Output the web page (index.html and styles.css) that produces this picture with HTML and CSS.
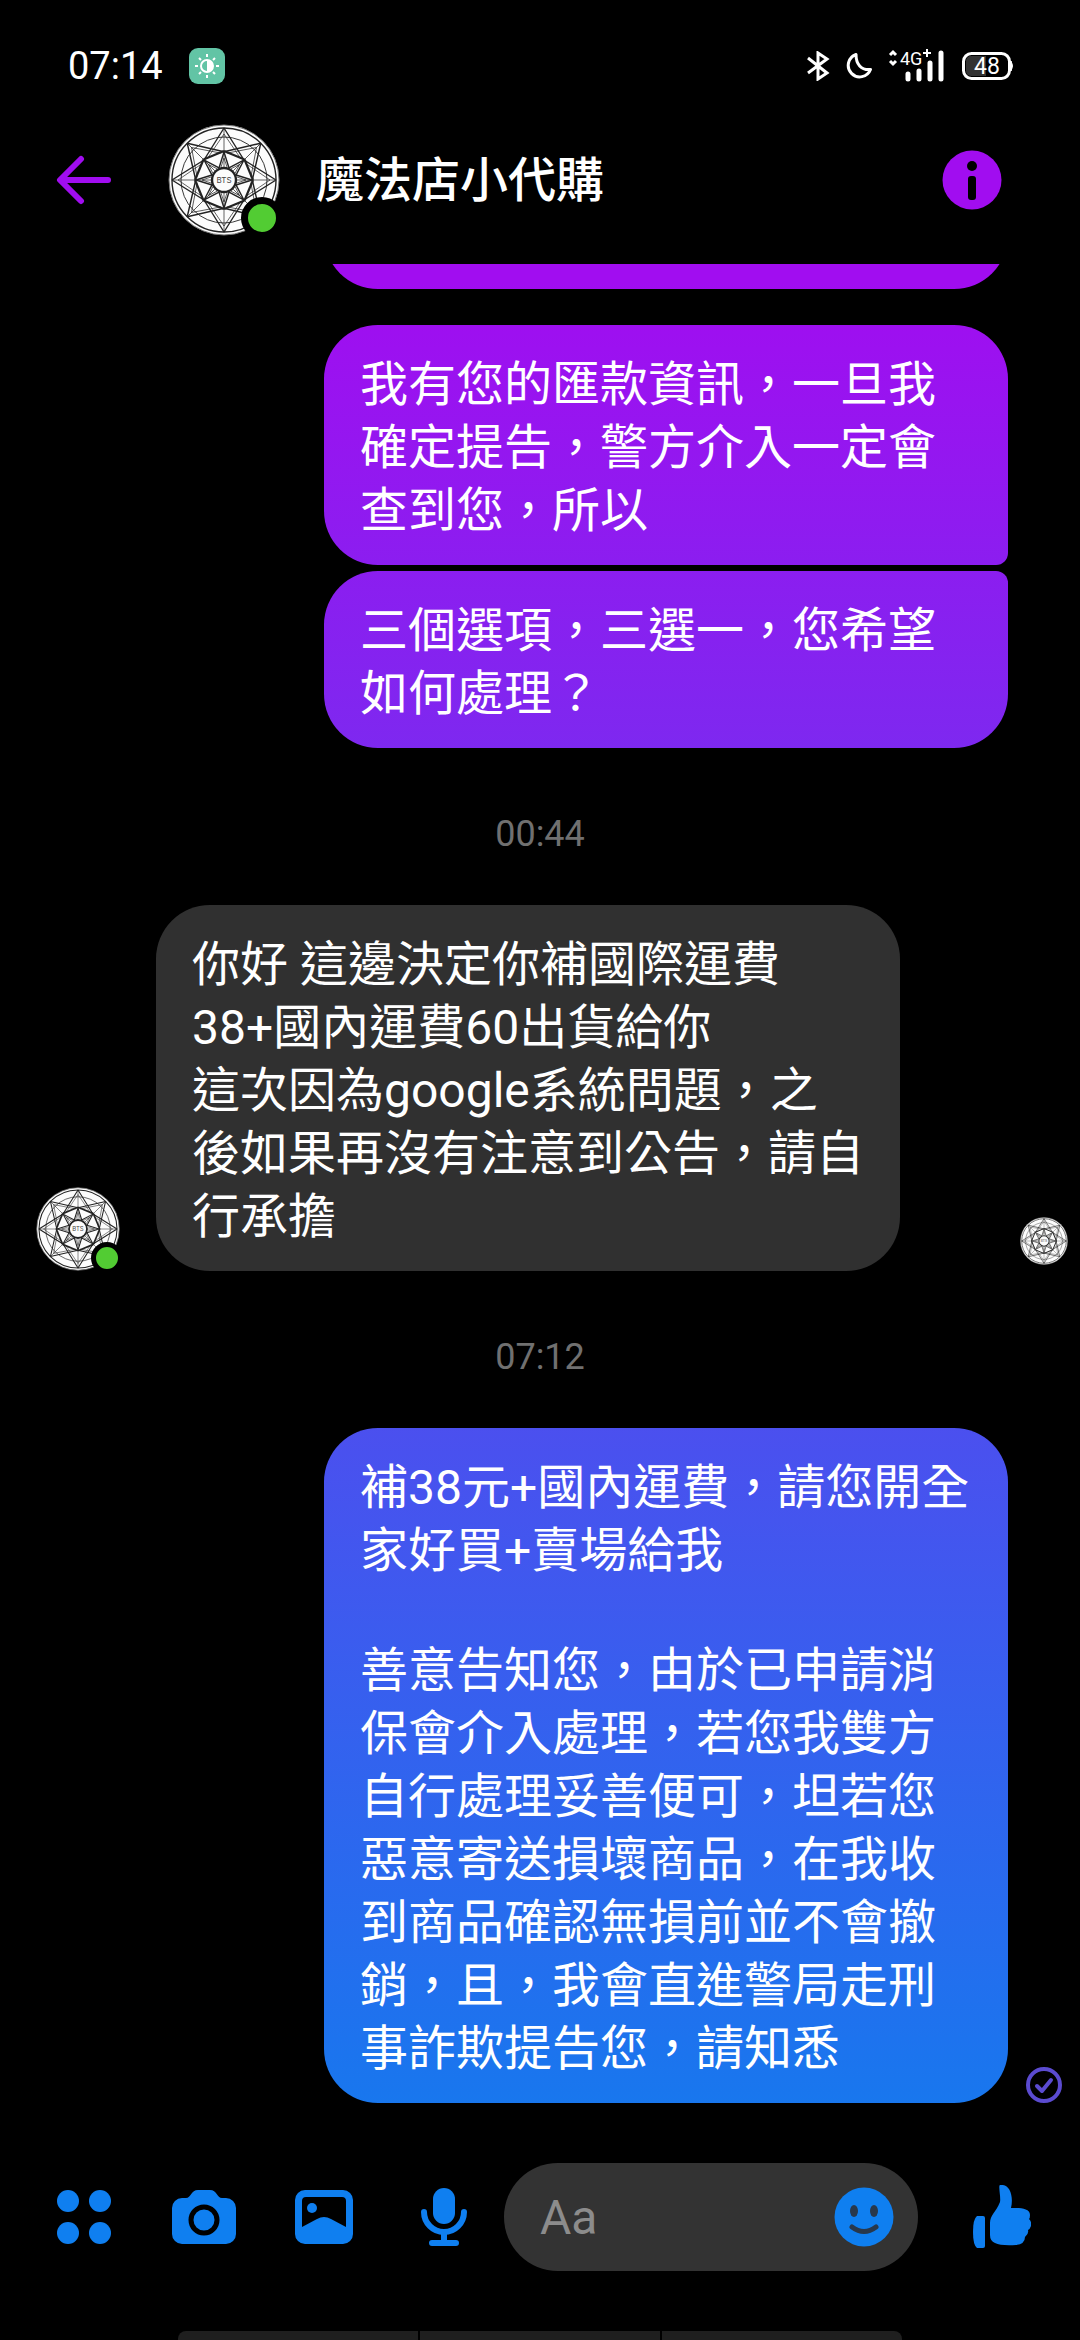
FILE: index.html
```html
<!DOCTYPE html>
<html lang="zh-Hant">
<head>
    <meta charset="UTF-8">
    <meta name="viewport" content="width=device-width, initial-scale=1.0">
    <title>魔法店小代購</title>
    <link rel="stylesheet" href="styles.css">
</head>
<body>

    <!-- Avatar, shared by header / message / seen marker -->
    <svg class="sprite" width="0" height="0" aria-hidden="true">
        <defs>
            <g id="ray">
                <path d="M0 -52L20 -20M0 -52L-20 -20" stroke-width="1.4"/>
                <path d="M0 -46L17 -21M0 -46L-17 -21M0 -52V-13" stroke-width=".7"/>
                <path d="M0 -29L20.5 -20.5" stroke-width="2.2"/>
                <path d="M0 -28L5 -12M0 -28L-5 -12" stroke-width="1.4"/>
                <path d="M0 -22L3 -13M0 -22L-3 -13" stroke-width=".7"/>
            </g>
            <symbol id="avatar" viewBox="-56 -56 112 112">
                <circle r="55" fill="#fcfcfc" stroke="#777" stroke-width="1"/>
                <g fill="none" stroke="#222">
                    <circle r="52" stroke-width="1.4"/>
                    <circle r="43" stroke-width=".9"/>
                    <use href="#ray"/>
                    <use href="#ray" transform="rotate(45)"/>
                    <use href="#ray" transform="rotate(90)"/>
                    <use href="#ray" transform="rotate(135)"/>
                    <use href="#ray" transform="rotate(180)"/>
                    <use href="#ray" transform="rotate(225)"/>
                    <use href="#ray" transform="rotate(270)"/>
                    <use href="#ray" transform="rotate(315)"/>
                    <circle r="12" fill="#fcfcfc" stroke-width="2.4"/>
                </g>
                <text class="avatar-text" text-anchor="middle" y="3">BTS</text>
            </symbol>
        </defs>
    </svg>

    <div class="status-bar">
        <span class="clock">07:14</span>
        <svg class="app-badge" width="36" height="36" viewBox="0 0 36 36" aria-hidden="true">
            <rect width="36" height="36" rx="9" fill="#62c4a5"/>
            <circle cx="18" cy="18" r="6" fill="none" stroke="#fff" stroke-width="2"/>
            <path d="M18 12a6 6 0 0 1 0 12z" fill="#fff"/>
            <path d="M18 6v3M18 27v3M6 18h3M27 18h3M10 10l2 2M24 24l2 2M26 10l-2 2M12 24l-2 2" stroke="#fff" stroke-width="2"/>
        </svg>
        <div class="status-icons">
            <svg width="24" height="30" viewBox="0 0 24 30" fill="none" stroke="#fff" stroke-width="3" aria-label="藍牙">
                <path d="M2 7l19 15-9 6V2l9 6L2 22"/>
            </svg>
            <svg width="26" height="28" viewBox="0 0 26 28" fill="none" stroke="#fff" stroke-width="3" stroke-linejoin="round" aria-label="勿擾">
                <path d="M10 2.500C10 12 15 18.500 24.500 17.500A11.500 11.500 0 1 1 10 2.500z"/>
            </svg>
            <svg class="signal" width="58" height="40" viewBox="0 0 58 40" aria-label="4G+">
                <path d="M2 9l3-3 3 3M2 15l3 3 3-3" fill="none" stroke="#fff" stroke-width="3"/>
                <text class="signal-text" x="12" y="19">4G</text>
                <path d="M35 7h8M39 3v8" stroke="#fff" stroke-width="2"/>
                <path d="M20 28v5M31 25v8M42 17v16M53 7v26" stroke="#fff" stroke-width="5" stroke-linecap="round"/>
            </svg>
            <svg width="52" height="30" viewBox="0 0 52 30" aria-label="電量">
                <rect x="1.500" y="2.500" width="46" height="25" rx="8" fill="none" stroke="#fff" stroke-width="3"/>
                <path d="M9 5h15v20H9a5 5 0 0 1-5-5V10a5 5 0 0 1 5-5z" fill="#333"/>
                <path d="M49 10q3 5 0 10z" fill="#fff" stroke="#fff"/>
                <text class="battery-text" x="25" y="23" text-anchor="middle">48</text>
            </svg>
        </div>
    </div>

    <header class="header">
        <button class="icon-btn" type="button" aria-label="返回">
            <svg width="56" height="50" viewBox="0 0 56 50" fill="none" stroke="#a10df0" stroke-width="6" stroke-linecap="round" stroke-linejoin="round">
                <path d="M25 4L4 25l21 21M5 25h47"/>
            </svg>
        </button>
        <div class="avatar avatar-large">
            <svg viewBox="0 0 112 112"><use href="#avatar"/></svg>
            <span class="online"></span>
        </div>
        <h1 class="name">魔法店小代購</h1>
        <button class="icon-btn info" type="button" aria-label="資訊">
            <svg width="60" height="60" viewBox="0 0 60 60">
                <circle cx="30" cy="30" r="29.500" fill="#a10df0"/>
                <circle cx="30" cy="16" r="5" fill="#000"/>
                <rect x="26" y="26" width="8" height="24" rx="3" fill="#000"/>
            </svg>
        </button>
    </header>

    <main class="thread">
        <div class="row sent">
            <div class="bubble bubble-cut"></div>
        </div>

        <div class="row sent">
            <p class="bubble bubble-first">我有您的匯款資訊，一旦我確定提告，警方介入一定會查到您，所以</p>
        </div>
        <div class="row sent">
            <p class="bubble bubble-last">三個選項，三選一，您希望如何處理？</p>
        </div>

        <time class="time">00:44</time>

        <div class="row received">
            <div class="avatar avatar-small">
                <svg viewBox="0 0 112 112"><use href="#avatar"/></svg>
                <span class="online"></span>
            </div>
            <p class="bubble">你好 這邊決定你補國際運費<br>38+國內運費60出貨給你<br>這次因為google系統問題，之後如果再沒有注意到公告，請自行承擔</p>
            <div class="receipt">
                <svg class="seen" viewBox="0 0 112 112"><use href="#avatar"/></svg>
            </div>
        </div>

        <time class="time">07:12</time>

        <div class="row sent">
            <div class="bubble">
                <p>補38元+國內運費，請您開全家好買+賣場給我</p>
                <p>善意告知您，由於已申請消保會介入處理，若您我雙方自行處理妥善便可，坦若您惡意寄送損壞商品，在我收到商品確認無損前並不會撤銷，且，我會直進警局走刑事詐欺提告您，請知悉</p>
            </div>
            <div class="receipt">
                <svg width="36" height="36" viewBox="0 0 36 36" fill="none" stroke="#5b4bd0" aria-label="已傳送">
                    <circle cx="18" cy="18" r="16" stroke-width="4"/>
                    <path d="M11 19l5 5 9-11" stroke-width="4" stroke-linecap="round" stroke-linejoin="round"/>
                </svg>
            </div>
        </div>
    </main>

    <form class="composer">
        <button class="icon-btn" type="button" aria-label="更多">
            <svg width="54" height="54" viewBox="0 0 54 54" fill="#0f7ff0">
                <circle cx="11" cy="11" r="11"/>
                <circle cx="43" cy="11" r="11"/>
                <circle cx="11" cy="43" r="11"/>
                <circle cx="43" cy="43" r="11"/>
            </svg>
        </button>
        <button class="icon-btn" type="button" aria-label="相機">
            <svg width="64" height="54" viewBox="0 0 64 54" fill="#0f7ff0">
                <path d="M10 8h4c5 0 5-8 12-8h12c7 0 7 8 12 8h4a10 10 0 0 1 10 10v26a10 10 0 0 1-10 10H10A10 10 0 0 1 0 44V18A10 10 0 0 1 10 8z"/>
                <circle cx="32" cy="30" r="13" stroke="#000" stroke-width="5"/>
            </svg>
        </button>
        <button class="icon-btn" type="button" aria-label="相片">
            <svg width="58" height="54" viewBox="0 0 58 54" fill="#0f7ff0">
                <path fill-rule="evenodd" d="M10 0h38a10 10 0 0 1 10 10v34a10 10 0 0 1-10 10H10A10 10 0 0 1 0 44V10A10 10 0 0 1 10 0zM11 7q-4 0-4 4v26l15-8q7-4 14 0l15 8V11q0-4-4-4z"/>
                <circle cx="17" cy="18" r="5"/>
            </svg>
        </button>
        <button class="icon-btn" type="button" aria-label="語音">
            <svg width="46" height="60" viewBox="0 0 46 60" fill="none" stroke="#0f7ff0" stroke-width="6" stroke-linecap="round">
                <rect x="12" y="1" width="22" height="36" rx="11" fill="#0f7ff0" stroke="none"/>
                <path d="M3 25c0 11 9 20 20 20s20-9 20-20M23 46v9M11 56h24"/>
            </svg>
        </button>
        <div class="field">
            <input class="field-input" type="text" placeholder="Aa" aria-label="訊息">
            <button class="emoji-btn" type="button" aria-label="表情符號">
                <svg width="60" height="60" viewBox="0 0 60 60">
                    <circle cx="30" cy="30" r="29.500" fill="#0f7ff0"/>
                    <ellipse cx="20" cy="24" rx="4" ry="6" fill="#28384c"/>
                    <ellipse cx="40" cy="24" rx="4" ry="6" fill="#28384c"/>
                    <path d="M18 40q12 9 24 0" fill="none" stroke="#28384c" stroke-width="5" stroke-linecap="round"/>
                </svg>
            </button>
        </div>
        <button class="icon-btn like" type="button" aria-label="讚">
            <svg width="58" height="64" viewBox="0 0 58 64" fill="#0f7ff0">
                <path d="M4 31h6q2 0 2 2v28q0 2-2 2H4Q0 60 0 47T4 31z"/>
                <path d="M28 0c8-1 13 10 10 23 9 0 19 0 19 7q0 3-1 4 3 3 2 7-1 3-3 4 1 4-3 7 0 7-9 8-15 1-21-2-5-2-5-8V38c0-8 6-11 10-21 1-5-2-16 0-17z"/>
            </svg>
        </button>
    </form>

    <div class="nav-hint">
        <span></span>
        <span></span>
        <span></span>
    </div>

</body>
</html>
```
FILE: styles.css
```css
* {
    margin: 0;
    padding: 0;
    box-sizing: border-box;
}

body {
    font-family: Roboto, "Noto Sans CJK TC", sans-serif;
    background-color: #000;
    color: #fff;
    height: 100vh;
    display: flex;
    flex-direction: column;
    overflow: hidden;
}

svg {
    display: block;
    flex: none;
}

button {
    background: none;
    border: none;
    cursor: pointer;
}

.sprite {
    position: absolute;
}

/* Status bar */
.status-bar {
    display: flex;
    align-items: center;
    flex: none;
    height: 108px;
    padding: 24px 66px 0 68px;
}

.clock {
    font-size: 38px;
    line-height: 42px;
}

.app-badge {
    margin-left: 26px;
}

.status-icons {
    display: flex;
    align-items: center;
    gap: 16px;
    margin-left: auto;
}

.signal-text {
    font-size: 18px;
    fill: #fff;
}

.battery-text {
    font-size: 23px;
    fill: #fff;
}

/* Header */
.header {
    display: flex;
    align-items: center;
    flex: none;
    height: 156px;
    padding: 0 48px 12px 24px;
}

.icon-btn {
    display: flex;
    align-items: center;
    justify-content: center;
    flex: none;
    width: 120px;
    height: 108px;
}

.name {
    font-size: 48px;
    font-weight: 500;
    line-height: 63px;
    margin-left: 36px;
}

.info {
    margin-left: auto;
}

/* Avatars */
.avatar {
    position: relative;
    flex: none;
}

.avatar svg {
    width: 100%;
    height: 100%;
}

.avatar-large {
    width: 112px;
    height: 112px;
    margin-left: 24px;
}

.avatar-small {
    width: 84px;
    height: 84px;
    margin-right: 36px;
}

.avatar-text {
    font-family: Inter, sans-serif;
    font-size: 8px;
    fill: #444;
}

.online {
    position: absolute;
    right: -3px;
    bottom: -3px;
    width: 42px;
    height: 42px;
    border: 7px solid #000;
    border-radius: 50%;
    background-color: #52cc33;
}

.avatar-small .online {
    width: 32px;
    height: 32px;
    border-width: 5px;
}

/* Thread */
.thread {
    display: flex;
    flex-direction: column;
    justify-content: flex-end;
    flex: 1;
    min-height: 0;
    padding-bottom: 24px;
    overflow: hidden;
}

.row {
    display: flex;
    align-items: flex-end;
    flex: none;
    margin-top: 6px;
}

.bubble {
    padding: 28px 36px 23px;
    border-radius: 54px;
    font-size: 48px;
    line-height: 63px;
}

.sent {
    position: relative;
    padding: 0 72px 0 30%;
}

/* one gradient runs behind all the sent bubbles */
.sent .bubble {
    flex: 1;
    background: linear-gradient(#a10df0 12%, #1877ee 90%) fixed;
}

.sent .bubble p + p {
    margin-top: 57px;
}

.bubble-cut {
    height: 108px;
    margin-bottom: 30px;
}

.sent .bubble-first {
    border-bottom-right-radius: 12px;
}

.sent .bubble-last {
    border-top-right-radius: 12px;
}

.received {
    padding-left: 36px;
}

.received .bubble {
    background-color: #303030;
    max-width: 744px;
}

.time {
    flex: none;
    margin: 65px 0 44px;
    color: #707070;
    font-size: 36px;
    line-height: 42px;
    text-align: center;
}

.receipt {
    display: flex;
    justify-content: center;
    width: 72px;
    margin-left: auto;
}

.sent .receipt {
    position: absolute;
    right: 0;
    bottom: 0;
}

.seen {
    width: 48px;
    height: 48px;
    margin-bottom: 6px;
}

/* Composer */
.composer {
    display: flex;
    align-items: center;
    flex: none;
    padding: 36px 18px 60px 24px;
}

.field {
    display: flex;
    align-items: center;
    flex: 1;
    min-width: 0;
    height: 108px;
    padding: 0 24px 0 36px;
    border-radius: 54px;
    background-color: #333;
}

.field-input {
    flex: 1;
    min-width: 0;
    background: none;
    border: none;
    outline: none;
    color: #fff;
    font-family: inherit;
    font-size: 48px;
}

.field-input::placeholder {
    color: #8c8c8c;
}

.like {
    margin-left: 24px;
}

/* Gesture hint at the bottom edge */
.nav-hint {
    display: flex;
    gap: 2px;
    flex: none;
    height: 9px;
    margin: 0 auto;
    width: 67%;
    border-radius: 8px 8px 0 0;
    overflow: hidden;
}

.nav-hint span {
    flex: 1;
    background-color: #1f1f1f;
}
```
